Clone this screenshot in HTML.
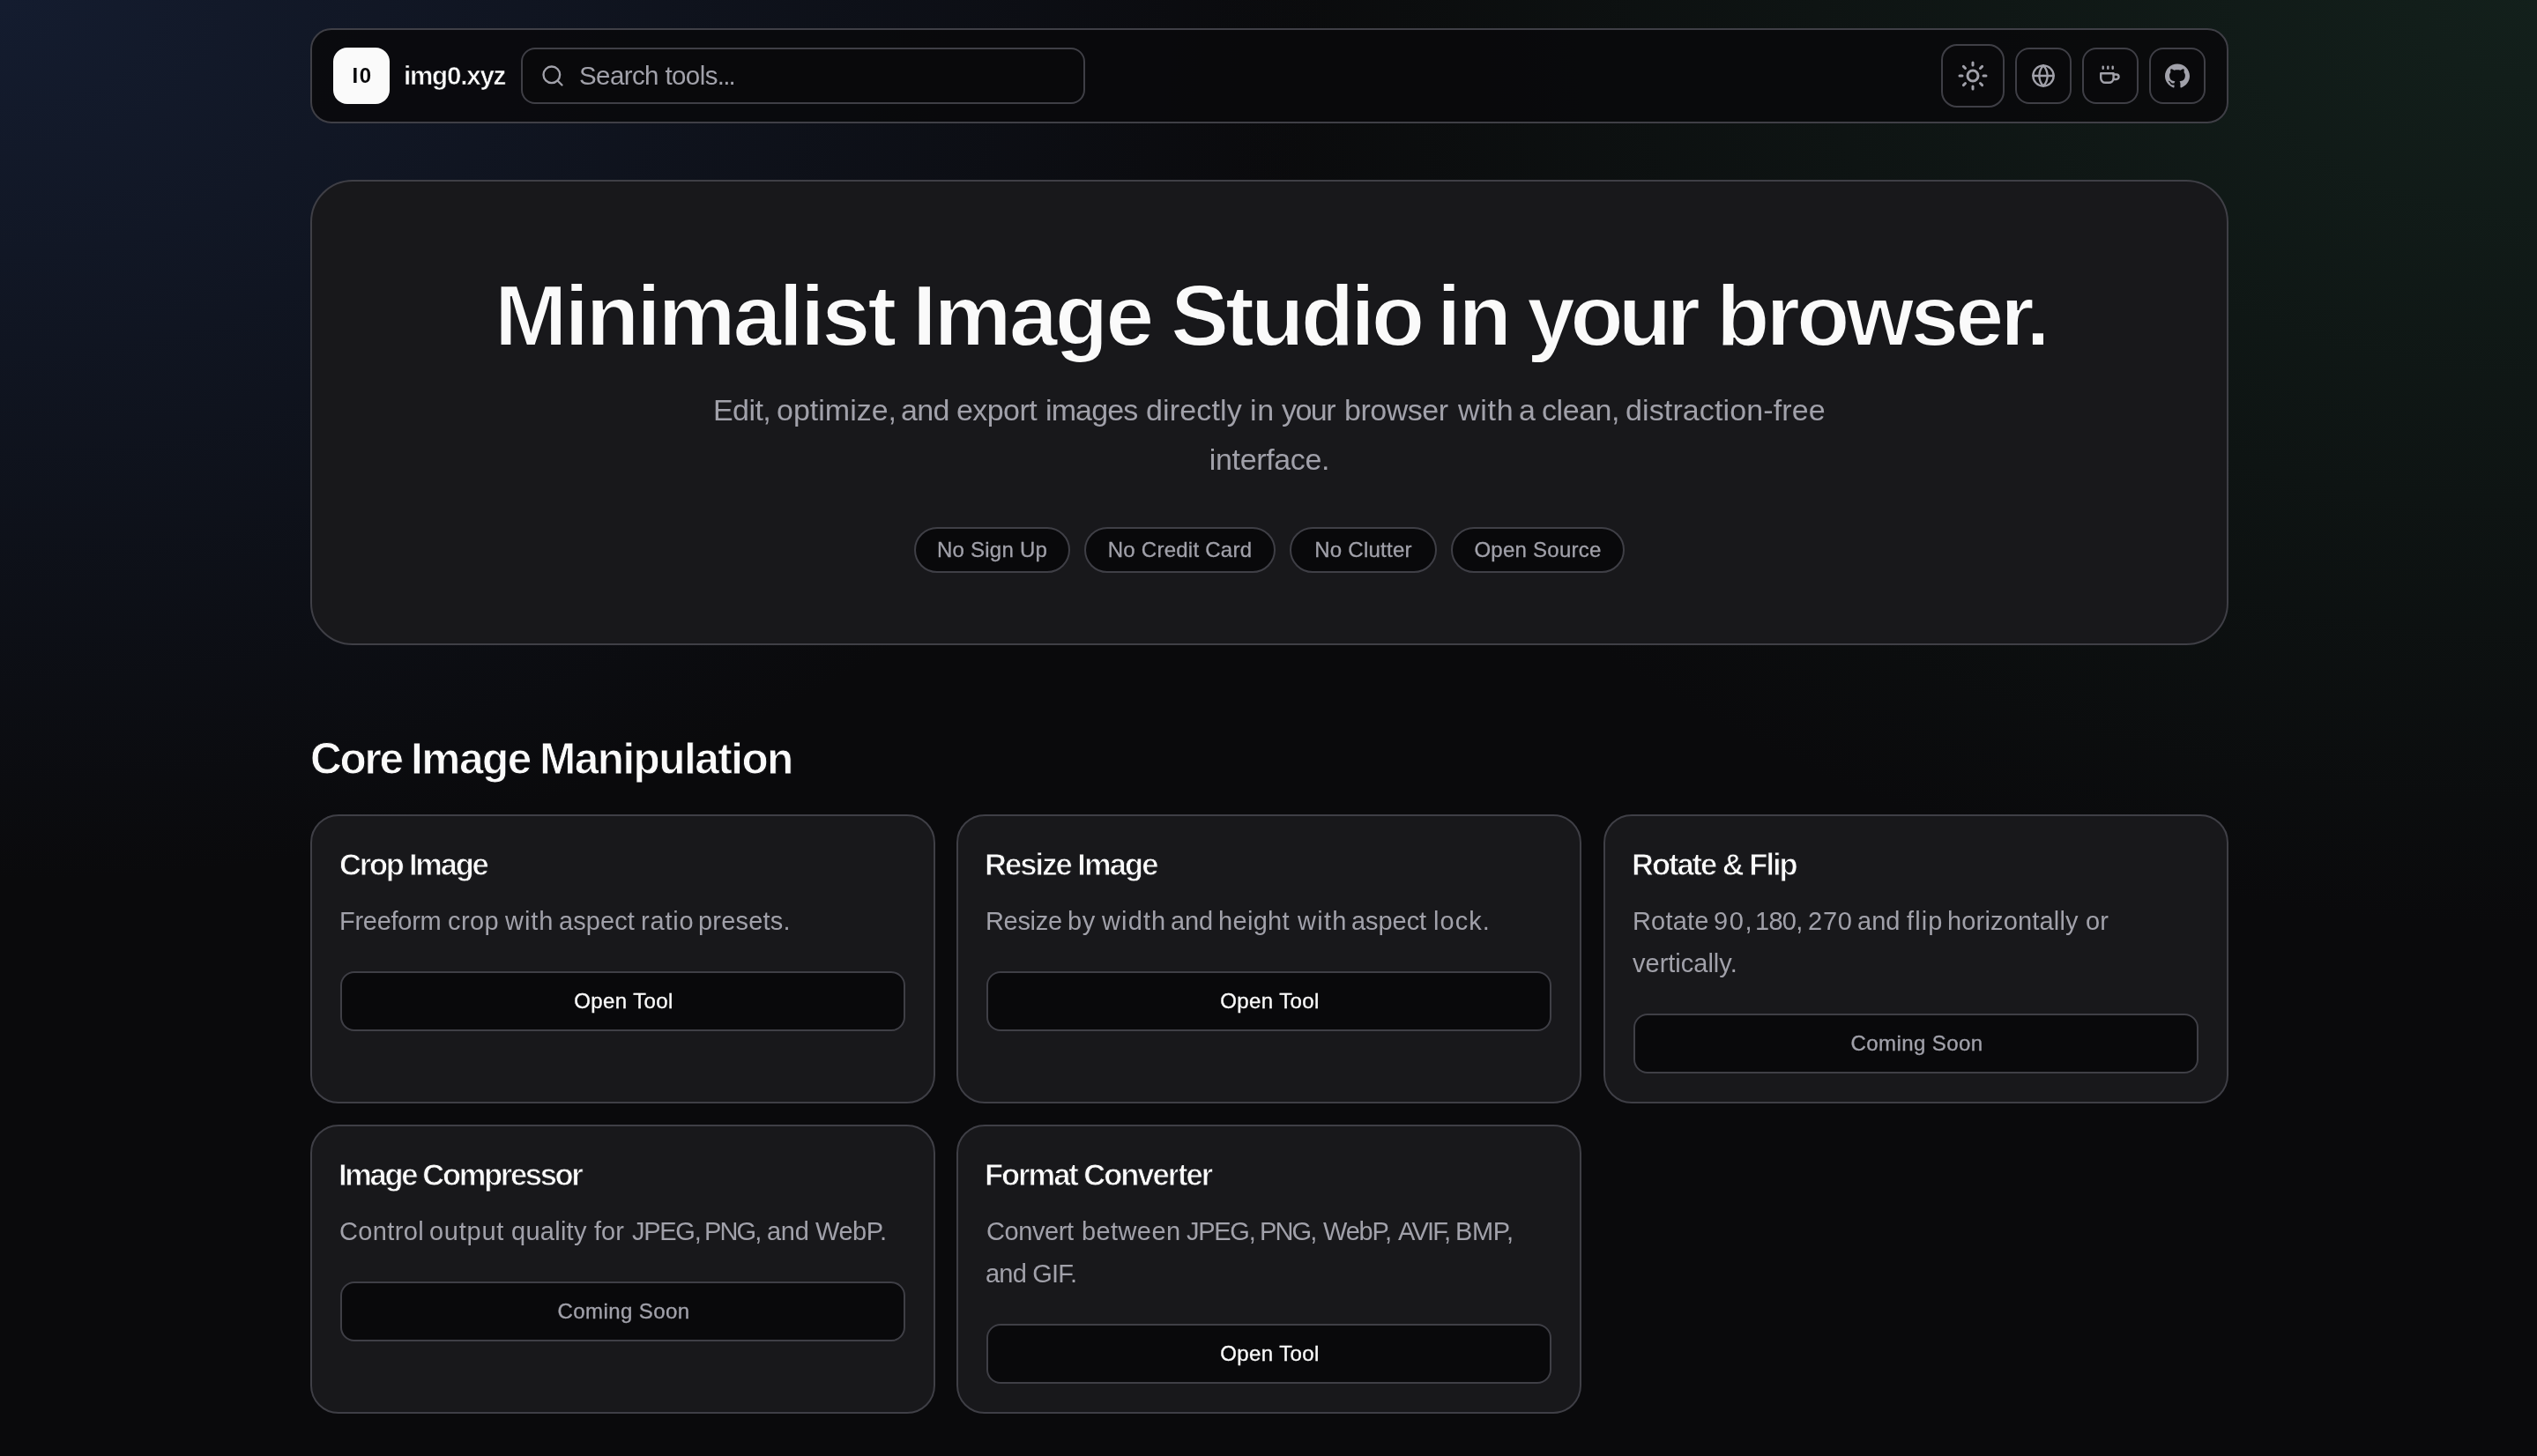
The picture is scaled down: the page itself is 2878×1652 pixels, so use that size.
<!DOCTYPE html>
<html><head><meta charset="utf-8"><title>img0.xyz</title>
<style>
html,body{margin:0;padding:0;}
body{width:2878px;height:1652px;overflow:hidden;position:relative;font-family:"Liberation Sans",sans-serif;
background:
radial-gradient(ellipse 1500px 1000px at 0px 0px, rgba(28,43,76,0.55), rgba(28,43,76,0) 100%),
radial-gradient(ellipse 1500px 1050px at 2878px 0px, rgba(26,50,40,0.55), rgba(26,50,40,0) 100%),
#0a0a0c;}
.box{position:absolute;box-sizing:border-box;border:2px solid #3f3f46;}
.t{position:absolute;white-space:nowrap;will-change:transform;}
.ic{position:absolute;}
@media (max-width:2000px){html{zoom:0.5;}}
</style></head><body>
<div class="box" style="left:352px;top:32px;width:2176px;height:108px;border-radius:24px;background:rgba(9,9,11,0.88);"></div>
<div class="box" style="left:378px;top:54px;width:64px;height:64px;border-radius:16px;background:#fafafa;border:none;"></div>
<div class="t" style="left:379px;top:74.18px;font-size:24px;line-height:24px;color:#09090b;font-weight:700;letter-spacing:1.5px;width:64px;text-align:center;">I0</div>
<div class="t" style="left:457.5px;top:71.03px;font-size:29.5px;line-height:29.5px;color:#fafafa;font-weight:700;letter-spacing:-1.18px;-webkit-text-stroke:0.6px #0a0b0e;">img0.xyz</div>
<div class="box" style="left:591px;top:54px;width:640px;height:64px;border-radius:16px;background:#09090b;"></div>
<svg class="ic" style="left:613px;top:72px" width="28" height="28" viewBox="0 0 24 24" fill="none" stroke="#a1a1aa" stroke-width="2" stroke-linecap="round" stroke-linejoin="round"><circle cx="11" cy="11" r="8"/><path d="m21 21-4.3-4.3"/></svg>
<div class="t" style="left:657px;top:71.03px;font-size:29.5px;line-height:29.5px;color:#a1a1aa;letter-spacing:-0.6px;">Search tools<span style="letter-spacing:-1.8px">...</span></div>
<div class="box" style="left:2202px;top:50px;width:72px;height:72px;border-radius:18px;background:#09090b;"></div>
<svg class="ic" style="left:2220px;top:68px" width="36" height="36" viewBox="0 0 24 24" fill="none" stroke="#a1a1aa" stroke-width="2" stroke-linecap="round" stroke-linejoin="round"><circle cx="12" cy="12" r="4"/><path d="M12 2v2"/><path d="M12 20v2"/><path d="m4.93 4.93 1.41 1.41"/><path d="m17.66 17.66 1.41 1.41"/><path d="M2 12h2"/><path d="M20 12h2"/><path d="m6.34 17.66-1.41 1.41"/><path d="m19.07 4.93-1.41 1.41"/></svg>
<div class="box" style="left:2286px;top:54px;width:64px;height:64px;border-radius:16px;background:#09090b;"></div>
<div class="box" style="left:2362px;top:54px;width:64px;height:64px;border-radius:16px;background:#09090b;"></div>
<div class="box" style="left:2438px;top:54px;width:64px;height:64px;border-radius:16px;background:#09090b;"></div>
<svg class="ic" style="left:2304px;top:72px" width="28" height="28" viewBox="0 0 24 24" fill="none" stroke="#a1a1aa" stroke-width="2" stroke-linecap="round" stroke-linejoin="round"><circle cx="12" cy="12" r="10"/><path d="M12 2a14.5 14.5 0 0 0 0 20 14.5 14.5 0 0 0 0-20"/><path d="M2 12h20"/></svg>
<svg class="ic" style="left:2362px;top:54px" width="64" height="64" viewBox="0 0 64 64" fill="none" stroke="#a1a1aa" stroke-width="2.4" stroke-linecap="round" stroke-linejoin="round"><path d="M23.7 21.6v2.2M29.3 21.6v2.2M34.7 21.6v2.2"/><path d="M21.2 29.3H35.6V34.6a5.2 5.2 0 0 1-5.2 5.2h-4a5.2 5.2 0 0 1-5.2-5.2Z"/><path d="M35.6 30.5h3.2a2.75 2.75 0 0 1 0 5.5h-3.2"/></svg>
<svg class="ic" style="left:2456px;top:72px" width="28" height="28" viewBox="0 0 24 24" fill="#a1a1aa"><path d="M12 .5C5.37.5 0 5.78 0 12.292c0 5.211 3.438 9.63 8.205 11.188.6.111.82-.254.82-.567 0-.28-.01-1.022-.015-2.005-3.338.711-4.042-1.582-4.042-1.582-.546-1.361-1.335-1.725-1.335-1.725-1.087-.731.084-.716.084-.716 1.205.082 1.838 1.215 1.838 1.215 1.07 1.803 2.809 1.282 3.495.981.108-.763.417-1.282.76-1.577-2.665-.295-5.466-1.309-5.466-5.827 0-1.287.465-2.339 1.235-3.164-.135-.298-.54-1.497.105-3.121 0 0 1.005-.316 3.3 1.209.96-.262 1.98-.392 3-.398 1.02.006 2.04.136 3 .398 2.28-1.525 3.285-1.209 3.285-1.209.645 1.624.24 2.823.12 3.121.765.825 1.23 1.877 1.23 3.164 0 4.53-2.805 5.527-5.475 5.817.42.354.81 1.077.81 2.182 0 1.578-.015 2.846-.015 3.229 0 .309.21.678.825.56C20.565 21.917 24 17.495 24 12.292 24 5.78 18.627.5 12 .5z"/></svg>
<div class="box" style="left:352px;top:204px;width:2176px;height:528px;border-radius:48px;background:#18181b;"></div>
<div class="t" style="left:560.55px;top:308.20px;font-size:99px;line-height:99px;color:#fafafa;font-weight:700;letter-spacing:-3.089px;-webkit-text-stroke:1.9px #18181b;">Minimalist</div>
<div class="t" style="left:1034.75px;top:308.20px;font-size:99px;line-height:99px;color:#fafafa;font-weight:700;letter-spacing:-2.945px;-webkit-text-stroke:1.9px #18181b;">Image</div>
<div class="t" style="left:1327.55px;top:308.20px;font-size:99px;line-height:99px;color:#fafafa;font-weight:700;letter-spacing:-3.94px;-webkit-text-stroke:1.9px #18181b;">Studio</div>
<div class="t" style="left:1629.95px;top:308.20px;font-size:99px;line-height:99px;color:#fafafa;font-weight:700;letter-spacing:-3.1px;-webkit-text-stroke:1.9px #18181b;">in</div>
<div class="t" style="left:1732.25px;top:308.20px;font-size:99px;line-height:99px;color:#fafafa;font-weight:700;letter-spacing:-5.866px;-webkit-text-stroke:1.9px #18181b;">your</div>
<div class="t" style="left:1947.45px;top:308.20px;font-size:99px;line-height:99px;color:#fafafa;font-weight:700;letter-spacing:-4.059px;-webkit-text-stroke:1.9px #18181b;">browser.</div>
<div class="t" style="left:808.5px;top:448.22px;font-size:34px;line-height:34px;color:#a1a1aa;letter-spacing:-0.56px;">Edit,</div>
<div class="t" style="left:881px;top:448.22px;font-size:34px;line-height:34px;color:#a1a1aa;">optimize,</div>
<div class="t" style="left:1021.9px;top:448.22px;font-size:34px;line-height:34px;color:#a1a1aa;letter-spacing:-0.61px;">and</div>
<div class="t" style="left:1084.7px;top:448.22px;font-size:34px;line-height:34px;color:#a1a1aa;letter-spacing:-0.58px;">export</div>
<div class="t" style="left:1186.2px;top:448.22px;font-size:34px;line-height:34px;color:#a1a1aa;letter-spacing:-0.88px;">images</div>
<div class="t" style="left:1299.9px;top:448.22px;font-size:34px;line-height:34px;color:#a1a1aa;letter-spacing:0.15px;">directly</div>
<div class="t" style="left:1418px;top:448.22px;font-size:34px;line-height:34px;color:#a1a1aa;letter-spacing:0.64px;">in</div>
<div class="t" style="left:1454.1px;top:448.22px;font-size:34px;line-height:34px;color:#a1a1aa;letter-spacing:-1.53px;">your</div>
<div class="t" style="left:1525.1px;top:448.22px;font-size:34px;line-height:34px;color:#a1a1aa;letter-spacing:-0.48px;">browser</div>
<div class="t" style="left:1653.9px;top:448.22px;font-size:34px;line-height:34px;color:#a1a1aa;letter-spacing:0.7px;">with</div>
<div class="t" style="left:1723.4px;top:448.22px;font-size:34px;line-height:34px;color:#a1a1aa;">a</div>
<div class="t" style="left:1749px;top:448.22px;font-size:34px;line-height:34px;color:#a1a1aa;letter-spacing:-0.44px;">clean,</div>
<div class="t" style="left:1843.8px;top:448.22px;font-size:34px;line-height:34px;color:#a1a1aa;letter-spacing:0.12px;">distraction-free</div>
<div class="t" style="left:352px;top:504.22px;font-size:34px;line-height:34px;color:#a1a1aa;letter-spacing:-0.36px;width:2176px;text-align:center;">interface.</div>
<div class="box" style="left:1037px;top:598px;width:177px;height:52px;border-radius:26px;background:#09090b;"></div>
<div class="t" style="left:1037px;top:612.18px;font-size:24px;line-height:24px;color:#a1a1aa;letter-spacing:0.25px;width:177px;text-align:center;-webkit-text-stroke:0.3px #a1a1aa;">No Sign Up</div>
<div class="box" style="left:1230px;top:598px;width:217px;height:52px;border-radius:26px;background:#09090b;"></div>
<div class="t" style="left:1230px;top:612.18px;font-size:24px;line-height:24px;color:#a1a1aa;letter-spacing:0.25px;width:217px;text-align:center;-webkit-text-stroke:0.3px #a1a1aa;">No Credit Card</div>
<div class="box" style="left:1463px;top:598px;width:167px;height:52px;border-radius:26px;background:#09090b;"></div>
<div class="t" style="left:1463px;top:612.18px;font-size:24px;line-height:24px;color:#a1a1aa;letter-spacing:0.25px;width:167px;text-align:center;-webkit-text-stroke:0.3px #a1a1aa;">No Clutter</div>
<div class="box" style="left:1646px;top:598px;width:197px;height:52px;border-radius:26px;background:#09090b;"></div>
<div class="t" style="left:1646px;top:612.18px;font-size:24px;line-height:24px;color:#a1a1aa;letter-spacing:0.25px;width:197px;text-align:center;-webkit-text-stroke:0.3px #a1a1aa;">Open Source</div>
<div class="t" style="left:351.75px;top:836.40px;font-size:49.5px;line-height:49.5px;color:#fafafa;font-weight:700;letter-spacing:-2.267px;-webkit-text-stroke:0.9px #0b0b0e;">Core</div>
<div class="t" style="left:465.75px;top:836.40px;font-size:49.5px;line-height:49.5px;color:#fafafa;font-weight:700;letter-spacing:-1.425px;-webkit-text-stroke:0.9px #0b0b0e;">Image</div>
<div class="t" style="left:612.05px;top:836.40px;font-size:49.5px;line-height:49.5px;color:#fafafa;font-weight:700;letter-spacing:-1.536px;-webkit-text-stroke:0.9px #0b0b0e;">Manipulation</div>
<div class="box" style="left:352px;top:924px;width:709px;height:328px;border-radius:32px;background:#18181b;"></div>
<div class="t" style="left:384.9px;top:964.30px;font-size:34.5px;line-height:34.5px;color:#fafafa;font-weight:700;letter-spacing:-2.227px;-webkit-text-stroke:0.9px #18181b;">Crop Image</div>
<div class="t" style="left:385.4px;top:1031.45px;font-size:29px;line-height:29px;color:#a1a1aa;letter-spacing:-0.271px;">Freeform</div>
<div class="t" style="left:508.0px;top:1031.45px;font-size:29px;line-height:29px;color:#a1a1aa;letter-spacing:0.433px;">crop</div>
<div class="t" style="left:573.1px;top:1031.45px;font-size:29px;line-height:29px;color:#a1a1aa;letter-spacing:0.933px;">with</div>
<div class="t" style="left:634.3px;top:1031.45px;font-size:29px;line-height:29px;color:#a1a1aa;letter-spacing:0.06px;">aspect</div>
<div class="t" style="left:727.1px;top:1031.45px;font-size:29px;line-height:29px;color:#a1a1aa;letter-spacing:0.8px;">ratio</div>
<div class="t" style="left:791.9px;top:1031.45px;font-size:29px;line-height:29px;color:#a1a1aa;letter-spacing:0.2px;">presets.</div>
<div class="box" style="left:386px;top:1102px;width:641px;height:68px;border-radius:16px;background:#09090b;"></div>
<div class="t" style="left:387px;top:1124.18px;font-size:24px;line-height:24px;color:#fafafa;letter-spacing:0.4px;width:641px;text-align:center;-webkit-text-stroke:0.35px #fafafa;">Open Tool</div>
<div class="box" style="left:1085px;top:924px;width:709px;height:328px;border-radius:32px;background:#18181b;"></div>
<div class="t" style="left:1117.1px;top:964.30px;font-size:34.5px;line-height:34.5px;color:#fafafa;font-weight:700;letter-spacing:-1.935px;-webkit-text-stroke:0.9px #18181b;">Resize Image</div>
<div class="t" style="left:1118.3px;top:1031.45px;font-size:29px;line-height:29px;color:#a1a1aa;letter-spacing:-0.32px;">Resize</div>
<div class="t" style="left:1210.9px;top:1031.45px;font-size:29px;line-height:29px;color:#a1a1aa;letter-spacing:0.5px;">by</div>
<div class="t" style="left:1250.2px;top:1031.45px;font-size:29px;line-height:29px;color:#a1a1aa;letter-spacing:1.125px;">width</div>
<div class="t" style="left:1328.2px;top:1031.45px;font-size:29px;line-height:29px;color:#a1a1aa;letter-spacing:-0.15px;">and</div>
<div class="t" style="left:1382.1px;top:1031.45px;font-size:29px;line-height:29px;color:#a1a1aa;letter-spacing:0.32px;">height</div>
<div class="t" style="left:1471.5px;top:1031.45px;font-size:29px;line-height:29px;color:#a1a1aa;letter-spacing:1.3px;">with</div>
<div class="t" style="left:1532.9px;top:1031.45px;font-size:29px;line-height:29px;color:#a1a1aa;letter-spacing:-0.06px;">aspect</div>
<div class="t" style="left:1625.5px;top:1031.45px;font-size:29px;line-height:29px;color:#a1a1aa;letter-spacing:1.075px;">lock.</div>
<div class="box" style="left:1119px;top:1102px;width:641px;height:68px;border-radius:16px;background:#09090b;"></div>
<div class="t" style="left:1120px;top:1124.18px;font-size:24px;line-height:24px;color:#fafafa;letter-spacing:0.4px;width:641px;text-align:center;-webkit-text-stroke:0.35px #fafafa;">Open Tool</div>
<div class="box" style="left:1819px;top:924px;width:709px;height:328px;border-radius:32px;background:#18181b;"></div>
<div class="t" style="left:1850.5px;top:964.30px;font-size:34.5px;line-height:34.5px;color:#fafafa;font-weight:700;letter-spacing:-2.01px;-webkit-text-stroke:0.9px #18181b;">Rotate &amp; Flip</div>
<div class="t" style="left:1851.7px;top:1031.45px;font-size:29px;line-height:29px;color:#a1a1aa;letter-spacing:0.18px;">Rotate</div>
<div class="t" style="left:1944.3px;top:1031.45px;font-size:29px;line-height:29px;color:#a1a1aa;letter-spacing:1.6px;">90,</div>
<div class="t" style="left:1991.3px;top:1031.45px;font-size:29px;line-height:29px;color:#a1a1aa;letter-spacing:-0.733px;">180,</div>
<div class="t" style="left:2050.7px;top:1031.45px;font-size:29px;line-height:29px;color:#a1a1aa;letter-spacing:0.75px;">270</div>
<div class="t" style="left:2107.4px;top:1031.45px;font-size:29px;line-height:29px;color:#a1a1aa;letter-spacing:0.05px;">and</div>
<div class="t" style="left:2163.4px;top:1031.45px;font-size:29px;line-height:29px;color:#a1a1aa;letter-spacing:1.133px;">flip</div>
<div class="t" style="left:2209.4px;top:1031.45px;font-size:29px;line-height:29px;color:#a1a1aa;letter-spacing:0.164px;">horizontally</div>
<div class="t" style="left:2365.8px;top:1031.45px;font-size:29px;line-height:29px;color:#a1a1aa;letter-spacing:0.1px;">or</div>
<div class="t" style="left:1852px;top:1079.45px;font-size:29px;line-height:29px;color:#a1a1aa;">vertically.</div>
<div class="box" style="left:1853px;top:1150px;width:641px;height:68px;border-radius:16px;background:#09090b;"></div>
<div class="t" style="left:1854px;top:1172.18px;font-size:24px;line-height:24px;color:#a1a1aa;letter-spacing:0.4px;width:641px;text-align:center;-webkit-text-stroke:0.35px #a1a1aa;">Coming Soon</div>
<div class="box" style="left:352px;top:1276px;width:709px;height:328px;border-radius:32px;background:#18181b;"></div>
<div class="t" style="left:383.5px;top:1316.30px;font-size:34.5px;line-height:34.5px;color:#fafafa;font-weight:700;letter-spacing:-2.32px;-webkit-text-stroke:0.9px #18181b;">Image Compressor</div>
<div class="t" style="left:385.4px;top:1383.45px;font-size:29px;line-height:29px;color:#a1a1aa;letter-spacing:0.383px;">Control</div>
<div class="t" style="left:487.1px;top:1383.45px;font-size:29px;line-height:29px;color:#a1a1aa;letter-spacing:0.74px;">output</div>
<div class="t" style="left:579.6px;top:1383.45px;font-size:29px;line-height:29px;color:#a1a1aa;letter-spacing:0.267px;">quality</div>
<div class="t" style="left:674.0px;top:1383.45px;font-size:29px;line-height:29px;color:#a1a1aa;">for</div>
<div class="t" style="left:716.6px;top:1383.45px;font-size:29px;line-height:29px;color:#a1a1aa;letter-spacing:-1.275px;">JPEG,</div>
<div class="t" style="left:799.4px;top:1383.45px;font-size:29px;line-height:29px;color:#a1a1aa;letter-spacing:-1.833px;">PNG,</div>
<div class="t" style="left:869.8px;top:1383.45px;font-size:29px;line-height:29px;color:#a1a1aa;letter-spacing:-0.3px;">and</div>
<div class="t" style="left:925.0px;top:1383.45px;font-size:29px;line-height:29px;color:#a1a1aa;letter-spacing:-0.45px;">WebP.</div>
<div class="box" style="left:386px;top:1454px;width:641px;height:68px;border-radius:16px;background:#09090b;"></div>
<div class="t" style="left:387px;top:1476.18px;font-size:24px;line-height:24px;color:#a1a1aa;letter-spacing:0.4px;width:641px;text-align:center;-webkit-text-stroke:0.35px #a1a1aa;">Coming Soon</div>
<div class="box" style="left:1085px;top:1276px;width:709px;height:328px;border-radius:32px;background:#18181b;"></div>
<div class="t" style="left:1116.8px;top:1316.30px;font-size:34.5px;line-height:34.5px;color:#fafafa;font-weight:700;letter-spacing:-2.02px;-webkit-text-stroke:0.9px #18181b;">Format Converter</div>
<div class="t" style="left:1119.2px;top:1383.45px;font-size:29px;line-height:29px;color:#a1a1aa;letter-spacing:-0.433px;">Convert</div>
<div class="t" style="left:1226.7px;top:1383.45px;font-size:29px;line-height:29px;color:#a1a1aa;letter-spacing:0.4px;">between</div>
<div class="t" style="left:1345.7px;top:1383.45px;font-size:29px;line-height:29px;color:#a1a1aa;letter-spacing:-1.275px;">JPEG,</div>
<div class="t" style="left:1428.5px;top:1383.45px;font-size:29px;line-height:29px;color:#a1a1aa;letter-spacing:-1.833px;">PNG,</div>
<div class="t" style="left:1501.1px;top:1383.45px;font-size:29px;line-height:29px;color:#a1a1aa;letter-spacing:-1.2px;">WebP,</div>
<div class="t" style="left:1585.6px;top:1383.45px;font-size:29px;line-height:29px;color:#a1a1aa;letter-spacing:-1.75px;">AVIF,</div>
<div class="t" style="left:1650.5px;top:1383.45px;font-size:29px;line-height:29px;color:#a1a1aa;letter-spacing:-0.4px;">BMP,</div>
<div class="t" style="left:1118px;top:1431.45px;font-size:29px;line-height:29px;color:#a1a1aa;letter-spacing:-0.8px;">and GIF.</div>
<div class="box" style="left:1119px;top:1502px;width:641px;height:68px;border-radius:16px;background:#09090b;"></div>
<div class="t" style="left:1120px;top:1524.18px;font-size:24px;line-height:24px;color:#fafafa;letter-spacing:0.4px;width:641px;text-align:center;-webkit-text-stroke:0.35px #fafafa;">Open Tool</div>
</body></html>
